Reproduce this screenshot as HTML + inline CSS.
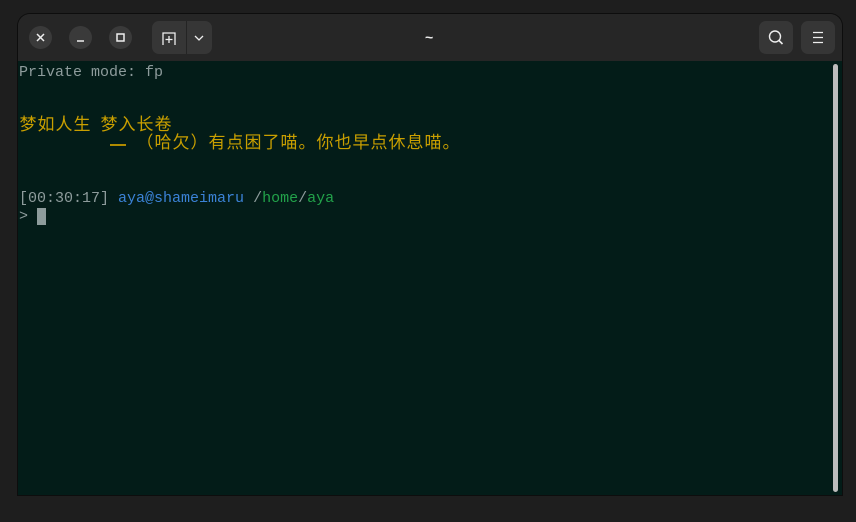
<!DOCTYPE html>
<html><head><meta charset="utf-8"><style>
html,body{margin:0;padding:0;width:856px;height:522px;background:#1e1e1e;overflow:hidden}
.win{position:absolute;left:18px;top:14px;width:824px;height:481px;border-radius:12px 12px 0 0;background:#242424;overflow:hidden;box-shadow:0 0 0 1px #0d0d0d}
.tb{position:absolute;left:0;top:0;width:824px;height:47px;background:#262626}
.cb{position:absolute;top:12px;width:23px;height:23px;border-radius:50%;background:#3a3a3a}
.term{position:absolute;left:0;top:47px;width:824px;height:434px;background:#031c18}
.t{position:absolute;left:1px;top:3px;font-family:"Liberation Mono","Noto Sans CJK SC",monospace;font-size:15px;line-height:18px;color:#8e9c9c;white-space:pre}
.y{color:#c99f00}
.c{display:inline-block;width:18px;text-align:center;font-size:17px;line-height:18px;vertical-align:top}
.b{color:#3b82d6}.g{color:#22a24a}
.btn{position:absolute;top:7px;height:33px;border-radius:7px;background:#363636}
</style></head><body>
<div class="win">
<div class="tb">
<div class="cb" style="left:11px"><svg width="23" height="23"><path d="M8 8l7 7M15 8l-7 7" stroke="#eee" stroke-width="1.5"/></svg></div>
<div class="cb" style="left:51px"><svg width="23" height="23"><path d="M8 15h7" stroke="#eee" stroke-width="1.5"/></svg></div>
<div class="cb" style="left:91px"><svg width="23" height="23"><rect x="8" y="8" width="7" height="7" fill="none" stroke="#eee" stroke-width="1.5"/></svg></div>
<div class="btn" style="left:134px;width:60px;top:7px"><div style="position:absolute;left:34px;top:0;width:1px;height:33px;background:#242424"></div>
<svg width="60" height="33"><path d="M11 24v-12h12v12" fill="none" stroke="#eee" stroke-width="1.3"/><path d="M17 15v7M13.5 18.5h7" stroke="#eee" stroke-width="1.3"/><path d="M43 15l4 4 4-4" fill="none" stroke="#eee" stroke-width="1.3"/></svg></div>
<div style="position:absolute;left:407px;top:15px;color:#eee;font:bold 14px 'Liberation Sans',sans-serif">~</div>
<div class="btn" style="left:741px;width:34px"><svg width="34" height="33"><circle cx="16" cy="15.5" r="5.5" fill="none" stroke="#eee" stroke-width="1.4"/><path d="M20 19.5l3.5 3.5" stroke="#eee" stroke-width="1.6"/></svg></div>
<div class="btn" style="left:783px;width:34px"><svg width="34" height="33"><path d="M12 11.5h10M12 16.5h10M12 21.5h10" stroke="#eee" stroke-width="1.3"/></svg></div>
</div>
<div class="term">
<div class="t">Private mode: fp


<span class="y"><span class="c">梦</span><span class="c">如</span><span class="c">人</span><span class="c">生</span> <span class="c">梦</span><span class="c">入</span><span class="c">长</span><span class="c">卷</span></span>
<span class="y">          <span class="c" style="position:relative;top:0"><span style="position:absolute;left:1px;top:8px;width:16px;height:2px;background:#b08a00"></span>&nbsp;</span> <span class="c">（</span><span class="c">哈</span><span class="c">欠</span><span class="c">）</span><span class="c">有</span><span class="c">点</span><span class="c">困</span><span class="c">了</span><span class="c">喵</span><span class="c">。</span><span class="c">你</span><span class="c">也</span><span class="c">早</span><span class="c">点</span><span class="c">休</span><span class="c">息</span><span class="c">喵</span><span class="c">。</span></span>


[00:30:17] <span class="b">aya@shameimaru</span> /<span class="g">home</span>/<span class="g">aya</span>
&gt; <span style="background:#8e9c9c">&nbsp;</span></div>
<div style="position:absolute;left:815px;top:3px;width:5px;height:428px;border-radius:3px;background:#bdbdbd"></div>
</div>
</div>
</body></html>
